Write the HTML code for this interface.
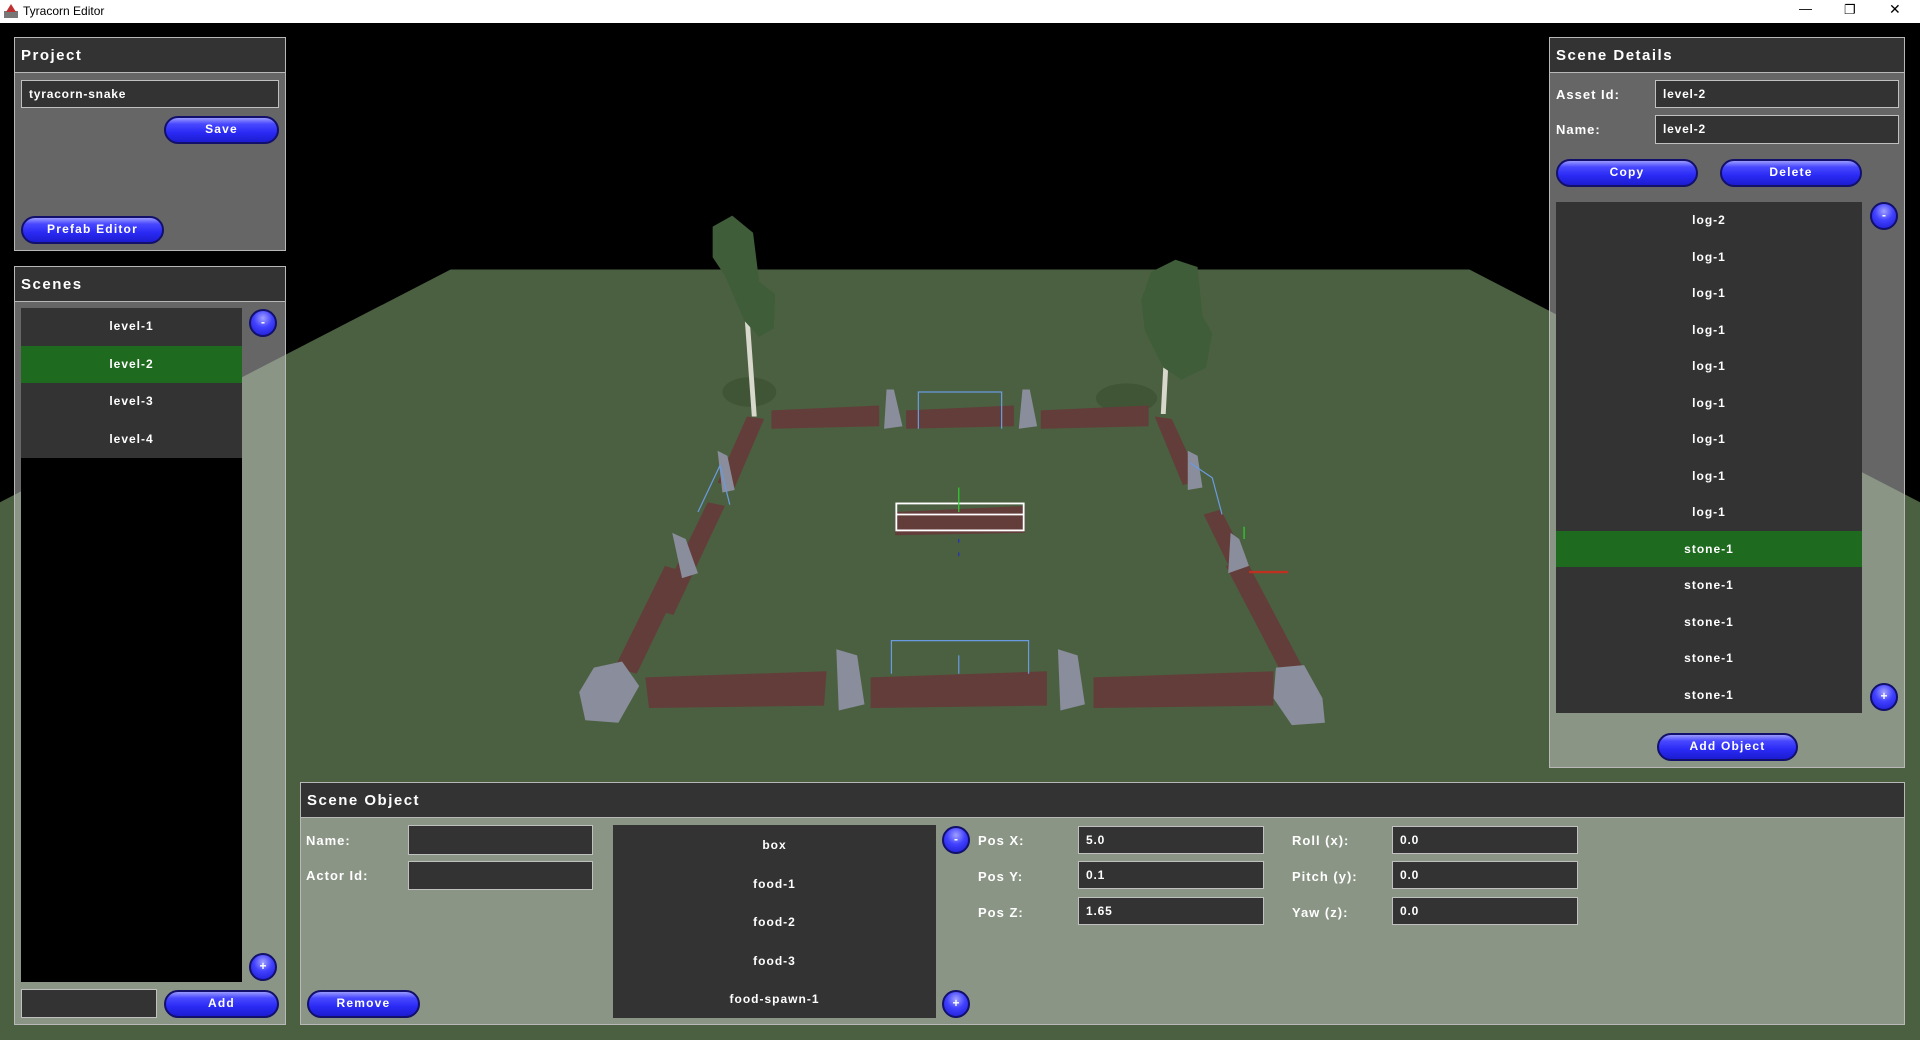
<!DOCTYPE html>
<html><head><meta charset="utf-8"><style>
*{box-sizing:border-box;margin:0;padding:0}
body{width:1920px;height:1040px;overflow:hidden;background:#000;font-family:"Liberation Sans",sans-serif;position:relative}
.abs{position:absolute}
#title{left:0;top:0;width:1920px;height:23px;background:#fff;font-size:12px;color:#000}
.panel{position:absolute;background:rgba(200,200,200,0.51);border:1px solid #b8b8b8}
.hdr{position:absolute;left:0;top:0;right:0;height:35px;background:#333;border-bottom:1px solid #b8b8b8;color:#fff;font-weight:bold;font-size:15px;letter-spacing:1.5px;padding:9px 0 0 6px}
.inp{position:absolute;background:#333;border:1px solid #c0c0c0;color:#fff;font-size:12px;font-weight:bold;padding:6px 0 0 7px;letter-spacing:.8px}
.btn{position:absolute;height:28px;border-radius:14px;border:2px solid #12106a;background:linear-gradient(#9a9aff 0%,#4848ff 25%,#2a2af5 60%,#1c1cd0 100%);color:#fff;font-weight:bold;font-size:12px;letter-spacing:1.2px;text-align:center;line-height:23px}
.circ{position:absolute;width:28px;height:28px;border-radius:50%;border:2px solid #12106a;background:radial-gradient(circle at 50% 30%,#a0a0ff 0%,#4040ff 45%,#1a1ad0 100%);color:#fff;font-weight:bold;font-size:12px;text-align:center;line-height:22px}
.lbl{position:absolute;color:#fff;font-weight:bold;font-size:13px;letter-spacing:1px}
.list{position:absolute;background:#000}
.item{height:37.5px;background:#333;color:#fff;font-weight:bold;font-size:12px;text-align:center;line-height:37.5px;letter-spacing:1px}
.sel{background:#1e6a1e}
</style></head><body>
<svg class="abs" style="left:0;top:0" width="1920" height="1040" viewBox="0 0 1568 849" preserveAspectRatio="none">
<rect width="1568" height="849" fill="#000"/>
<polygon points="0,410 368,220 1200,220 1568,410 1568,849 0,849" fill="#4b6040"/>
<ellipse cx="612" cy="320" rx="22" ry="12" fill="#405535"/>
<ellipse cx="920" cy="325" rx="25" ry="12" fill="#405535"/>
<polygon points="606,230 610,230 618,340 614,340" fill="#d8d8cc"/>
<polygon points="582,185 598,176 615,190 620,230 633,240 632,268 620,275 608,262 592,225 582,210" fill="#3e5d38"/>
<polygon points="950,300 954,300 952,338 948,338" fill="#d8d8cc"/>
<polygon points="940,222 960,212 978,218 982,258 990,272 985,300 965,310 950,300 935,270 932,245" fill="#3e5d38"/>
<polygon points="630,335 718,331 718,348 630,350" fill="#633d3a"/>
<polygon points="740,335 828,331 828,348 740,350" fill="#633d3a"/>
<polygon points="850,335 938,331 938,348 850,350" fill="#633d3a"/>
<polygon points="724,318 730,318 737,348 722,350" fill="#8a8d9c"/>
<polygon points="835,318 841,318 847,348 832,350" fill="#8a8d9c"/>
<polyline points="750,350 750,320 818,320 818,350" fill="none" stroke="#6a9ae0" stroke-width="1"/>
<polygon points="610,340 624,342 600,398 586,394" fill="#633d3a"/>
<polygon points="578,410 592,413 550,502 535,498" fill="#633d3a"/>
<polygon points="543,462 560,467 520,550 502,545" fill="#633d3a"/>
<polygon points="943,340 957,342 980,392 966,396" fill="#633d3a"/>
<polygon points="983,420 997,416 1037,495 1023,502" fill="#633d3a"/>
<polygon points="1001,462 1017,456 1064,545 1048,552" fill="#633d3a"/>
<polygon points="586,368 594,372 600,400 590,402" fill="#8a8d9c"/>
<polygon points="549,435 560,440 570,468 557,472" fill="#8a8d9c"/>
<polygon points="970,368 978,372 982,398 970,400" fill="#8a8d9c"/>
<polygon points="1005,435 1012,440 1020,462 1003,468" fill="#8a8d9c"/>
<polyline points="570,418 588,380 596,412" fill="none" stroke="#6a9ae0" stroke-width="1"/>
<polyline points="972,378 990,390 998,420" fill="none" stroke="#6a9ae0" stroke-width="1"/>
<line x1="1020" y1="467" x2="1052" y2="467" stroke="#c03020" stroke-width="2"/>
<line x1="1016" y1="430" x2="1016" y2="440" stroke="#30d030" stroke-width="1"/>
<polygon points="527,553 675,548 673,576 530,578" fill="#633d3a"/>
<polygon points="711,553 855,548 855,576 711,578" fill="#633d3a"/>
<polygon points="893,553 1040,548 1040,576 893,578" fill="#633d3a"/>
<polygon points="683,530 700,535 706,575 685,580" fill="#8a8d9c"/>
<polygon points="864,530 880,535 886,575 866,580" fill="#8a8d9c"/>
<polygon points="485,545 508,540 522,560 505,590 478,588 473,565" fill="#8a8d9c"/>
<polygon points="1042,545 1065,543 1080,570 1082,590 1055,592 1040,570" fill="#8a8d9c"/>
<polyline points="728,550 728,523 840,523 840,550" fill="none" stroke="#6a9ae0" stroke-width="1"/>
<line x1="783" y1="535" x2="783" y2="550" stroke="#6a9ae0" stroke-width="1"/>
<polygon points="731,418 837,413 837,435 731,437" fill="#633d3a"/>
<rect x="732" y="411" width="104" height="22" fill="none" stroke="#fff" stroke-width="1.5"/>
<line x1="732" y1="420" x2="836" y2="420" stroke="#fff" stroke-width="1.5"/>
<line x1="783" y1="398" x2="783" y2="418" stroke="#30d030" stroke-width="1"/>
<line x1="783" y1="440" x2="783" y2="456" stroke="#2030c0" stroke-width="1" stroke-dasharray="3,8"/>
</svg>

<div id="title" class="abs">
<svg class="abs" style="left:3px;top:3px" width="16" height="16"><rect x="1" y="8" width="14" height="7" fill="#777"/><polygon points="8,1 13,9 3,9" fill="#c03030"/></svg>
<span class="abs" style="left:23px;top:4px">Tyracorn Editor</span>
<span class="abs" style="left:1799px;top:1px;font-size:13px">—</span>
<span class="abs" style="left:1844px;top:2px;font-size:13px">❐</span>
<span class="abs" style="left:1889px;top:1px;font-size:14px">✕</span>
</div>

<div class="panel" style="left:14px;top:37px;width:272px;height:214px">
<div class="hdr">Project</div>
</div>
<div class="inp" style="left:21px;top:80px;width:258px;height:28px">tyracorn-snake</div>
<div class="btn" style="left:164px;top:116px;width:115px">Save</div>
<div class="btn" style="left:21px;top:216px;width:143px">Prefab Editor</div>

<div class="panel" style="left:14px;top:266px;width:272px;height:759px">
<div class="hdr">Scenes</div>
</div>
<div class="list" style="left:21px;top:308px;width:221px;height:674px">
<div class="item">level-1</div><div class="item sel">level-2</div><div class="item">level-3</div><div class="item">level-4</div>
</div>
<div class="circ" style="left:249px;top:309px">-</div>
<div class="circ" style="left:249px;top:953px">+</div>
<div class="inp" style="left:21px;top:989px;width:136px;height:29px"></div>
<div class="btn" style="left:164px;top:990px;width:115px">Add</div>

<div class="panel" style="left:1549px;top:37px;width:356px;height:731px">
<div class="hdr">Scene Details</div>
</div>
<div class="lbl" style="left:1556px;top:87px">Asset Id:</div>
<div class="inp" style="left:1655px;top:80px;width:244px;height:28px">level-2</div>
<div class="lbl" style="left:1556px;top:122px">Name:</div>
<div class="inp" style="left:1655px;top:115px;width:244px;height:29px">level-2</div>
<div class="btn" style="left:1556px;top:159px;width:142px">Copy</div>
<div class="btn" style="left:1720px;top:159px;width:142px">Delete</div>
<div class="list" style="left:1556px;top:202px;width:306px;height:511px;background:#333">
<div class="item" style="height:36.5px;line-height:36.5px">log-2</div>
<div class="item" style="height:36.5px;line-height:36.5px">log-1</div>
<div class="item" style="height:36.5px;line-height:36.5px">log-1</div>
<div class="item" style="height:36.5px;line-height:36.5px">log-1</div>
<div class="item" style="height:36.5px;line-height:36.5px">log-1</div>
<div class="item" style="height:36.5px;line-height:36.5px">log-1</div>
<div class="item" style="height:36.5px;line-height:36.5px">log-1</div>
<div class="item" style="height:36.5px;line-height:36.5px">log-1</div>
<div class="item" style="height:36.5px;line-height:36.5px">log-1</div>
<div class="item sel" style="height:36.5px;line-height:36.5px">stone-1</div>
<div class="item" style="height:36.5px;line-height:36.5px">stone-1</div>
<div class="item" style="height:36.5px;line-height:36.5px">stone-1</div>
<div class="item" style="height:36.5px;line-height:36.5px">stone-1</div>
<div class="item" style="height:36.5px;line-height:36.5px">stone-1</div>
</div>
<div class="circ" style="left:1870px;top:202px">-</div>
<div class="circ" style="left:1870px;top:683px">+</div>
<div class="btn" style="left:1657px;top:733px;width:141px">Add Object</div>

<div class="panel" style="left:300px;top:782px;width:1605px;height:243px">
<div class="hdr">Scene Object</div>
</div>
<div class="lbl" style="left:306px;top:833px">Name:</div>
<div class="inp" style="left:408px;top:825px;width:185px;height:30px"></div>
<div class="lbl" style="left:306px;top:868px">Actor Id:</div>
<div class="inp" style="left:408px;top:861px;width:185px;height:29px"></div>
<div class="list" style="left:613px;top:825px;width:323px;height:193px;background:#333">
<div class="item" style="height:38.5px;line-height:40px">box</div>
<div class="item" style="height:38.5px;line-height:40px">food-1</div>
<div class="item" style="height:38.5px;line-height:40px">food-2</div>
<div class="item" style="height:38.5px;line-height:40px">food-3</div>
<div class="item" style="height:38.5px;line-height:40px">food-spawn-1</div>
</div>
<div class="circ" style="left:942px;top:826px">-</div>
<div class="circ" style="left:942px;top:990px">+</div>
<div class="btn" style="left:307px;top:990px;width:113px">Remove</div>
<div class="lbl" style="left:978px;top:833px">Pos X:</div>
<div class="lbl" style="left:978px;top:869px">Pos Y:</div>
<div class="lbl" style="left:978px;top:905px">Pos Z:</div>
<div class="inp" style="left:1078px;top:826px;width:186px;height:28px">5.0</div>
<div class="inp" style="left:1078px;top:861px;width:186px;height:28px">0.1</div>
<div class="inp" style="left:1078px;top:897px;width:186px;height:28px">1.65</div>
<div class="lbl" style="left:1292px;top:833px">Roll (x):</div>
<div class="lbl" style="left:1292px;top:869px">Pitch (y):</div>
<div class="lbl" style="left:1292px;top:905px">Yaw (z):</div>
<div class="inp" style="left:1392px;top:826px;width:186px;height:28px">0.0</div>
<div class="inp" style="left:1392px;top:861px;width:186px;height:28px">0.0</div>
<div class="inp" style="left:1392px;top:897px;width:186px;height:28px">0.0</div>
</body></html>
